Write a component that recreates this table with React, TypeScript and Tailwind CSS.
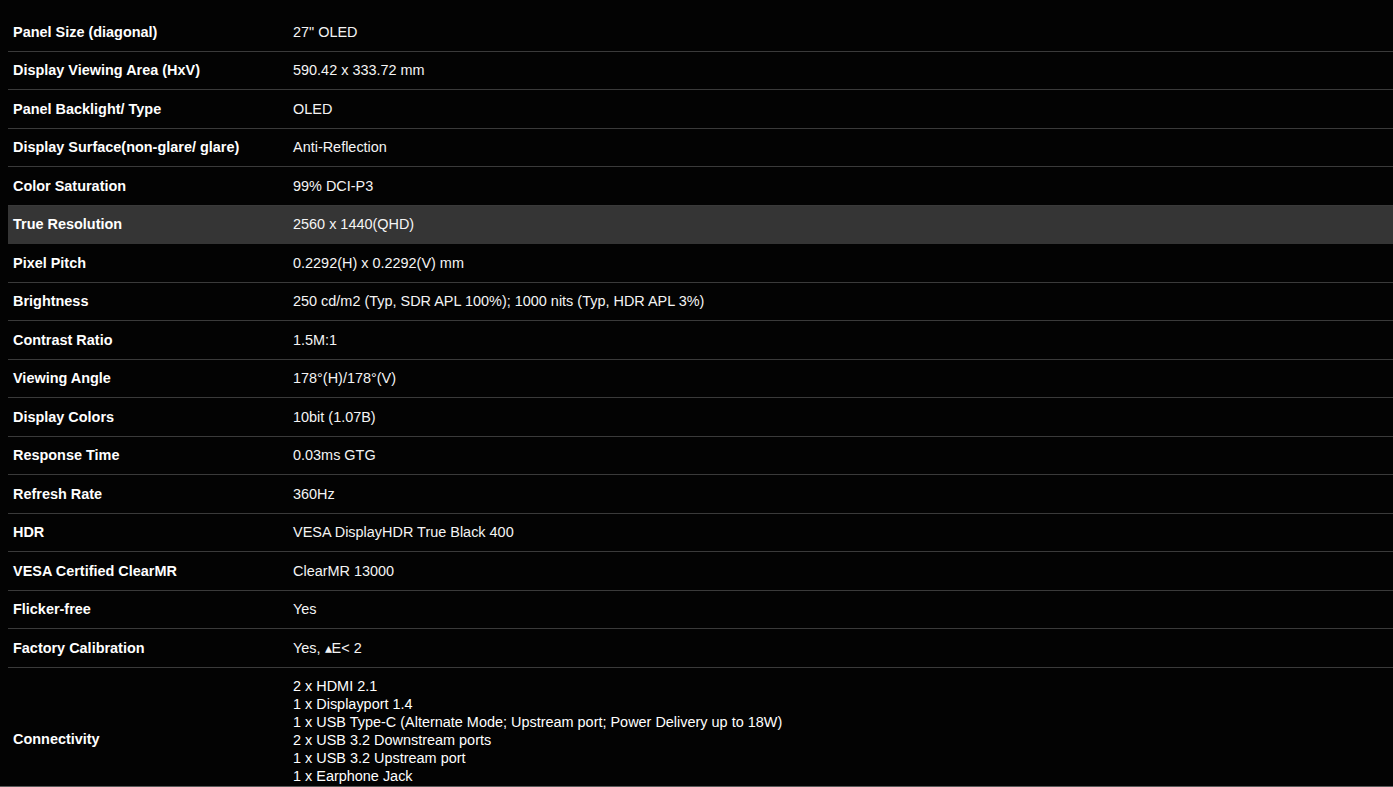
const specs: { label: string; value: string[]; active?: boolean }[] = [
  { label: "Panel Size (diagonal)", value: ['27" OLED'] },
  { label: "Display Viewing Area (HxV)", value: ["590.42 x 333.72 mm"] },
  { label: "Panel Backlight/ Type", value: ["OLED"] },
  { label: "Display Surface(non-glare/ glare)", value: ["Anti-Reflection"] },
  { label: "Color Saturation", value: ["99% DCI-P3"] },
  { label: "True Resolution", value: ["2560 x 1440(QHD)"], active: true },
  { label: "Pixel Pitch", value: ["0.2292(H) x 0.2292(V) mm"] },
  { label: "Brightness", value: ["250 cd/m2 (Typ, SDR APL 100%); 1000 nits (Typ, HDR APL 3%)"] },
  { label: "Contrast Ratio", value: ["1.5M:1"] },
  { label: "Viewing Angle", value: ["178°(H)/178°(V)"] },
  { label: "Display Colors", value: ["10bit (1.07B)"] },
  { label: "Response Time", value: ["0.03ms GTG"] },
  { label: "Refresh Rate", value: ["360Hz"] },
  { label: "HDR", value: ["VESA DisplayHDR True Black 400"] },
  { label: "VESA Certified ClearMR", value: ["ClearMR 13000"] },
  { label: "Flicker-free", value: ["Yes"] },
  { label: "Factory Calibration", value: ["Yes, \u25B4E< 2"] },
  {
    label: "Connectivity",
    value: [
      "2 x HDMI 2.1",
      "1 x Displayport 1.4",
      "1 x USB Type-C (Alternate Mode; Upstream port; Power Delivery up to 18W)",
      "2 x USB 3.2 Downstream ports",
      "1 x USB 3.2 Upstream port",
      "1 x Earphone Jack",
    ],
  },
];

export default function App() {
  return (
    <div
      className="relative w-[1393px] h-[787px] overflow-hidden bg-[#030303] pl-2 pt-[13px] text-[14.45px] text-white"
      style={{ fontFamily: '"Liberation Sans", Arial, sans-serif' }}
    >
      {specs.map((s) =>
        s.value.length > 1 ? (
          <div key={s.label} className="flex items-center border-b border-[#3a3a3a] pt-[9px]">
            <div className="w-[280px] shrink-0 pl-[5px] font-bold">{s.label}</div>
            <div className="pl-[5px] pb-[19px] leading-[18px]">
              {s.value.map((v) => (
                <div key={v}>{v}</div>
              ))}
            </div>
          </div>
        ) : (
          <div
            key={s.label}
            className={`flex h-[38.5px] items-center pt-[2px] border-b ${s.active ? "bg-[#353535] border-transparent" : "border-[#3a3a3a]"}`}
          >
            <div className="w-[280px] shrink-0 pl-[5px] font-bold">{s.label}</div>
            <div className="pl-[5px] text-[#f4f4f4]">{s.value[0]}</div>
          </div>
        )
      )}
      <div className="absolute bottom-0 left-0 h-px w-full bg-[#5a5a5a]" />
    </div>
  );
}
